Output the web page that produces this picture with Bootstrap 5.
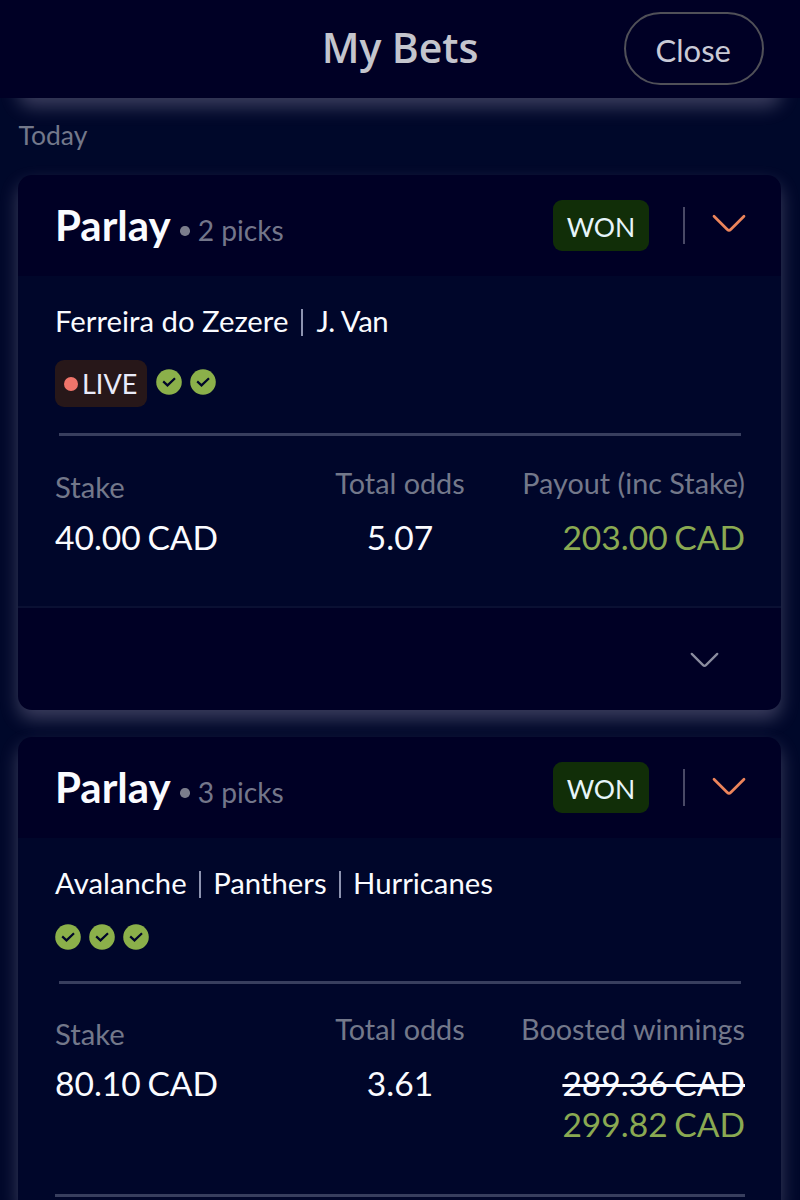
<!DOCTYPE html>
<html lang="en">
<head>
<meta charset="utf-8">
<meta name="viewport" content="width=device-width, initial-scale=1">
<title>My Bets</title>
<link href="https://cdn.jsdelivr.net/npm/bootstrap@5.3.0/dist/css/bootstrap.min.css" rel="stylesheet">
<style>
body{background:#00082a;color:#fafbff;font-family:Lato,"Liberation Sans",sans-serif;height:1200px;overflow:hidden}
.top-bar{height:98px;background:#000025;z-index:2}
.top-title{font:600 41px/56px "Open Sans","Noto Sans",sans-serif;letter-spacing:-.1px;color:#c4c5cd;padding-top:19px}
.btn-close-bets{right:36.5px;top:11.5px;width:139.5px;height:73px;border:2px solid #505058;color:#c9cad6;font-size:31px;line-height:37px;padding:18px 1px 0 0}
.bet{margin:0 19px 0 18px;border-radius:14px;background:#000025;box-shadow:0 9px 18px rgba(225,212,240,.26)}
.bet-prev{height:40px;margin-top:-40px}
.bet-gap{margin-bottom:27px}
.day{font-size:26.5px;line-height:32px;color:#73788a;margin:21px 18.5px 0;height:56px}
.bet-head{height:101px;padding:0 35px 0 37px}
.bet-name{font-size:42px;line-height:50px;font-weight:700}
.bet-count{font-size:28.2px;color:#73768a}
.dot{width:9.5px;height:9.5px;background:#7b7d8c;margin:0 8px 0 9.5px;transform:translateY(-5px)}
.won{width:96px;height:50.5px;border-radius:9px;background:#112e08;color:#e6f5fa;font-size:26.5px;line-height:32px;padding-top:11px}
.v-line{width:2px;height:37px;background:#494966;margin:0 27px 0 34px}
.chev{margin-bottom:3px}
.chev-low{margin-bottom:1px}
.bet-body{background:#00062a;padding:27.5px 36px 0 37px}
.bet-body-short{height:330px}
.bet-body-long{height:370px}
.picks{font-size:29.3px;line-height:34px;height:34px}
.tight{letter-spacing:-.35px}
.sep{width:2px;height:27px;background:#8d93b0;margin:4px 13px 0}
.picks-long .sep{margin-left:12.5px;margin-right:12px}
.marks{margin-top:22.5px;height:46.5px}
.marks-low{margin-top:24px;height:26px}
.live{width:92px;height:46.5px;border-radius:9px;background:#271719;color:#e9ebfa;font-size:27px;line-height:32px;padding:2px 0 0 9px;margin-right:9px}
.live i{width:14px;height:14px;background:#f0746a;margin-right:4px}
.tick{width:26px;height:26px;margin-right:8.2px}
.marks .tick{margin-bottom:2px}
.rule{height:3px;background:#383e5e;margin:26.5px 4px 0}
.rule-late{margin-top:31px}
.rule-end{height:3px;background:#383e5e;margin-top:48px}
.stats{padding-top:29.6px}
.stats-late{padding-top:28.6px}
.lbl{font-size:28.8px;line-height:34px;height:51px;color:#73788a}
.lbl-stake{font-size:29.3px;padding-top:4.5px}
.val{font-size:33.6px;line-height:41.3px;word-spacing:-2px}
.old{text-decoration:line-through;text-decoration-thickness:3px}
.win{color:#8aa952}
.bet-foot{height:104px;border-top:2px solid #0a1033;padding:2px 62.5px 0 0;border-radius:0 0 14px 14px}
</style>
</head>
<body>
<svg class="d-none">
  <symbol id="tick" viewBox="0 0 26 26"><circle cx="13" cy="13" r="12.8" fill="#8bb04a"/><path d="M7.2 12.4 11.5 16.4 19 9.300" fill="none" stroke="#00062a" stroke-width="2.2"/></symbol>
  <symbol id="chevron" viewBox="0 0 34 20"><path d="M2 2.200 15.300 15.500Q17 17.200 18.700 15.500L32 2.200" fill="none" stroke="currentColor" stroke-linecap="round" stroke-linejoin="round"/></symbol>
</svg>
<header class="top-bar position-relative text-center">
  <div class="top-title">My Bets</div>
  <button class="btn btn-close-bets rounded-pill position-absolute d-flex justify-content-center align-items-start">Close</button>
</header>
<main>
  <div class="bet bet-prev"></div>
  <div class="day">Today</div>

  <section class="bet bet-gap">
    <div class="bet-head d-flex align-items-center">
      <div class="me-auto d-flex align-items-baseline text-nowrap"><span class="bet-name">Parlay</span><span class="dot rounded-circle"></span><span class="bet-count">2 picks</span></div>
      <div class="won text-center">WON</div><div class="v-line"></div>
      <svg class="chev" width="34" height="20" color="#ec845b" stroke-width="2.7"><use href="#chevron"/></svg>
    </div>
    <div class="bet-body bet-body-short">
      <div class="picks d-flex align-items-center"><span>Ferreira do Zezere</span><span class="sep"></span><span class="tight">J. Van</span></div>
      <div class="marks d-flex align-items-center">
        <div class="live d-flex align-items-center"><i class="rounded-circle"></i>LIVE</div>
        <svg class="tick"><use href="#tick"/></svg><svg class="tick"><use href="#tick"/></svg>
      </div>
      <div class="rule"></div>
      <div class="stats row g-0 text-nowrap">
        <div class="col-4"><div class="lbl lbl-stake">Stake</div><div class="val">40.00 CAD</div></div>
        <div class="col-4 text-center"><div class="lbl">Total odds</div><div class="val">5.07</div></div>
        <div class="col-4 text-end"><div class="lbl">Payout (inc Stake)</div><div class="val win">203.00 CAD</div></div>
      </div>
    </div>
    <div class="bet-foot d-flex align-items-center justify-content-end">
      <svg width="29" height="17" viewBox="0 0 34 20" color="#8a8c9f" stroke-width="2.700"><use href="#chevron" width="34" height="20"/></svg>
    </div>
  </section>

  <section class="bet">
    <div class="bet-head d-flex align-items-center">
      <div class="me-auto d-flex align-items-baseline text-nowrap"><span class="bet-name">Parlay</span><span class="dot rounded-circle"></span><span class="bet-count">3 picks</span></div>
      <div class="won text-center">WON</div><div class="v-line"></div>
      <svg class="chev-low" width="34" height="20" color="#ec845b" stroke-width="2.7"><use href="#chevron"/></svg>
    </div>
    <div class="bet-body bet-body-long">
      <div class="picks picks-long d-flex align-items-center"><span>Avalanche</span><span class="sep"></span><span>Panthers</span><span class="sep"></span><span>Hurricanes</span></div>
      <div class="marks-low d-flex align-items-center">
        <svg class="tick"><use href="#tick"/></svg><svg class="tick"><use href="#tick"/></svg><svg class="tick"><use href="#tick"/></svg>
      </div>
      <div class="rule rule-late"></div>
      <div class="stats stats-late row g-0 text-nowrap">
        <div class="col-4"><div class="lbl lbl-stake">Stake</div><div class="val">80.10 CAD</div></div>
        <div class="col-4 text-center"><div class="lbl">Total odds</div><div class="val">3.61</div></div>
        <div class="col-4 text-end"><div class="lbl">Boosted winnings</div><div class="val old">289.36 CAD</div><div class="val win">299.82 CAD</div></div>
      </div>
      <div class="rule-end"></div>
    </div>
  </section>
</main>
<script src="https://cdn.jsdelivr.net/npm/bootstrap@5.3.0/dist/js/bootstrap.bundle.min.js"></script>
</body>
</html>
